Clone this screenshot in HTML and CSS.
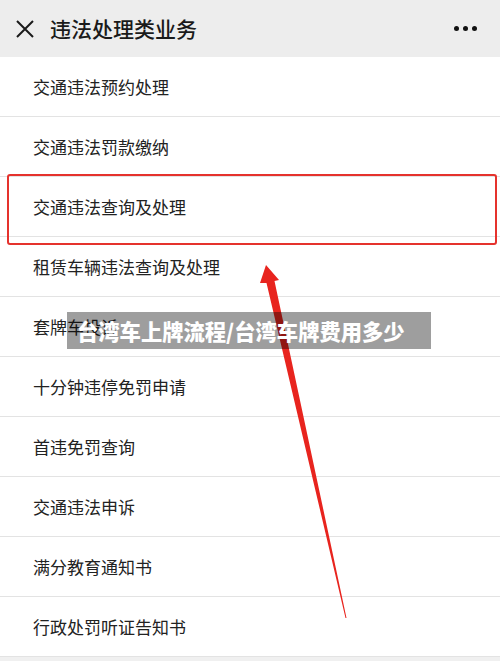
FILE: index.html
```html
<!DOCTYPE html>
<html lang="zh-CN">
<head>
<meta charset="utf-8">
<title>违法处理类业务</title>
<link rel="stylesheet" href="styles.css">
</head>
<body>
<div class="page">
  <header class="topbar">
    <svg class="close" width="20" height="20" viewBox="0 0 20 20"><path d="M2 2 L18 18 M18 2 L2 18" stroke="#1a1a1a" stroke-width="2" fill="none"/></svg>
    <h1 class="title">违法处理类业务</h1>
    <div class="more"><span></span><span></span><span></span></div>
  </header>
  <ul class="list">
    <li class="item">交通违法预约处理</li>
    <li class="item">交通违法罚款缴纳</li>
    <li class="item item-marked">交通违法查询及处理</li>
    <li class="item">租赁车辆违法查询及处理</li>
    <li class="item">套牌车投诉</li>
    <li class="item">十分钟违停免罚申请</li>
    <li class="item">首违免罚查询</li>
    <li class="item">交通违法申诉</li>
    <li class="item">满分教育通知书</li>
    <li class="item">行政处罚听证告知书</li>
  </ul>
  <svg class="arrow" width="500" height="661" viewBox="0 0 500 661">
    <polygon points="266,265 279,280 274.5,281 346.5,618 345.5,618 266.5,283 260,283" fill="#e8241e"/>
  </svg>
  <div class="banner">台湾车上牌流程/台湾车牌费用多少</div>
</div>
</body>
</html>
```
FILE: styles.css
```css
* { box-sizing: border-box; }
html, body { margin: 0; padding: 0; }
body {
  background: #f0f0f0;
  font-family: "Noto Sans CJK SC", "Noto Sans", sans-serif;
  color: #222;
}
.page {
  position: relative;
  width: 500px;
  height: 661px;
  overflow: hidden;
  background: #f0f0f0;
}
.topbar {
  height: 57px;
  background: #ededed;
  display: flex;
  align-items: center;
  padding: 0 0 0 15px;
}
.close { flex: none; margin-right: 15px; margin-top: 1px; }
.title {
  margin: 0;
  font-size: 21px;
  font-weight: 500;
  color: #1a1a1a;
  flex: 1;
  line-height: 1;
}
.more {
  display: flex;
  gap: 4px;
  margin-right: 23px;
}
.more span {
  width: 5px;
  height: 5px;
  border-radius: 50%;
  background: #111;
}
.list {
  list-style: none;
  margin: 0;
  padding: 0;
  background: #fff;
}
.item {
  position: relative;
  height: 60px;
  border-bottom: 1px solid #e3e3e3;
  display: flex;
  align-items: center;
  padding-left: 33px;
  font-size: 17px;
  color: #222;
}
.item-marked::after {
  content: "";
  position: absolute;
  left: 7px;
  right: 3px;
  top: -3px;
  height: 67px;
  border: 2.5px solid #e5322d;
  border-radius: 3px;
}
.arrow {
  position: absolute;
  left: 0;
  top: 0;
  pointer-events: none;
}
.banner {
  position: absolute;
  left: 67px;
  top: 312px;
  width: 364px;
  height: 37px;
  background: rgba(0, 0, 0, 0.38);
  color: #fff;
  font-size: 21.3px;
  font-weight: 900;
  line-height: 37px;
  padding-left: 10px;
  white-space: nowrap;
}
```
